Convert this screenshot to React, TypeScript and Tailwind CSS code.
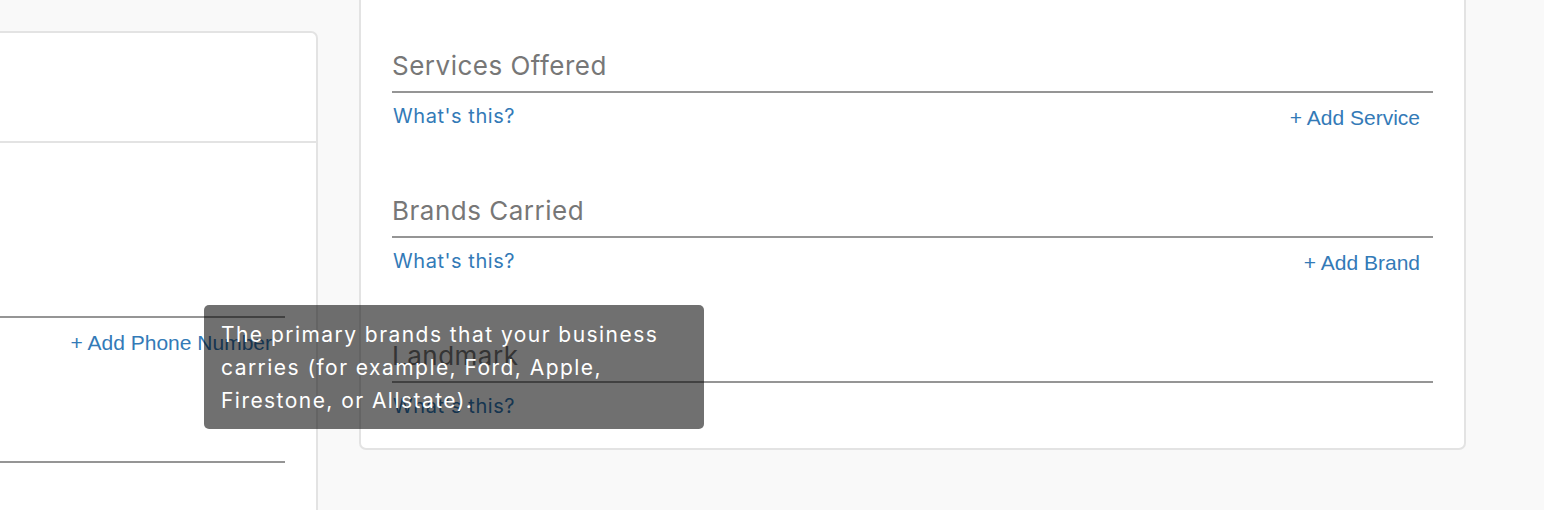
import React from "react";

const sans = { fontFamily: "Inter, 'Noto Sans', sans-serif" } as const;
const arial = { fontFamily: "'Liberation Sans', Arial, sans-serif" } as const;

function Section({ title, add, last }: { title: string; add?: string; last?: boolean }) {
  return (
    <div className={last ? "" : "mb-[66px]"}>
      <div className="border-b-2 border-[#959595] pb-[10px] text-[26px] leading-[30px] tracking-[0.5px] text-[#777777]">
        {title}
      </div>
      <div className="flex items-start justify-between pl-[1px] pr-[13px]">
        <a className="mt-[11px] text-[20px] leading-[24px] tracking-[0.55px] text-[#337ab7]">What's this?</a>
        {add ? (
          <a className="mt-[13px] text-[21px] leading-[24px] text-[#337ab7]" style={arial}>
            + {add}
          </a>
        ) : null}
      </div>
    </div>
  );
}

export default function App() {
  return (
    <div className="relative h-[510px] w-[1544px] overflow-hidden bg-[#f9f9f9]" style={sans}>
      <div className="flex items-start">
        <div className="ml-[-40px] mt-[31px] h-[520px] w-[358px] shrink-0 rounded-[7px] border-2 border-[#e3e3e3] bg-white">
          <div className="h-[110px] border-b-2 border-[#e3e3e3]" />
          <div className="pl-[38px] pr-[31px]">
            <div className="h-[175px] border-b-2 border-[#959595]" />
            <div className="flex justify-end pr-[13px]">
              <a className="mt-[13px] text-[21px] leading-[24px] text-[#337ab7]" style={arial}>
                + Add Phone Number
              </a>
            </div>
            <div className="h-[108px] border-b-2 border-[#959595]" />
          </div>
        </div>
        <div className="ml-[41px] mt-[-20px] w-[1107px] shrink-0 rounded-[7px] border-2 border-[#e3e3e3] bg-white px-[31px] pb-[30px] pt-[69px]">
          <Section title="Services Offered" add="Add Service" />
          <Section title="Brands Carried" add="Add Brand" />
          <Section title="Landmark" last />
        </div>
      </div>
      <div className="absolute left-[204px] top-[305px] h-[124px] w-[500px] rounded-[5px] bg-[rgba(0,0,0,0.56)] px-[17px] pt-[13px] text-[21px] leading-[33px] tracking-[1.45px] text-white">
        The primary brands that your business carries (for example, Ford, Apple, Firestone, or Allstate).
      </div>
    </div>
  );
}
